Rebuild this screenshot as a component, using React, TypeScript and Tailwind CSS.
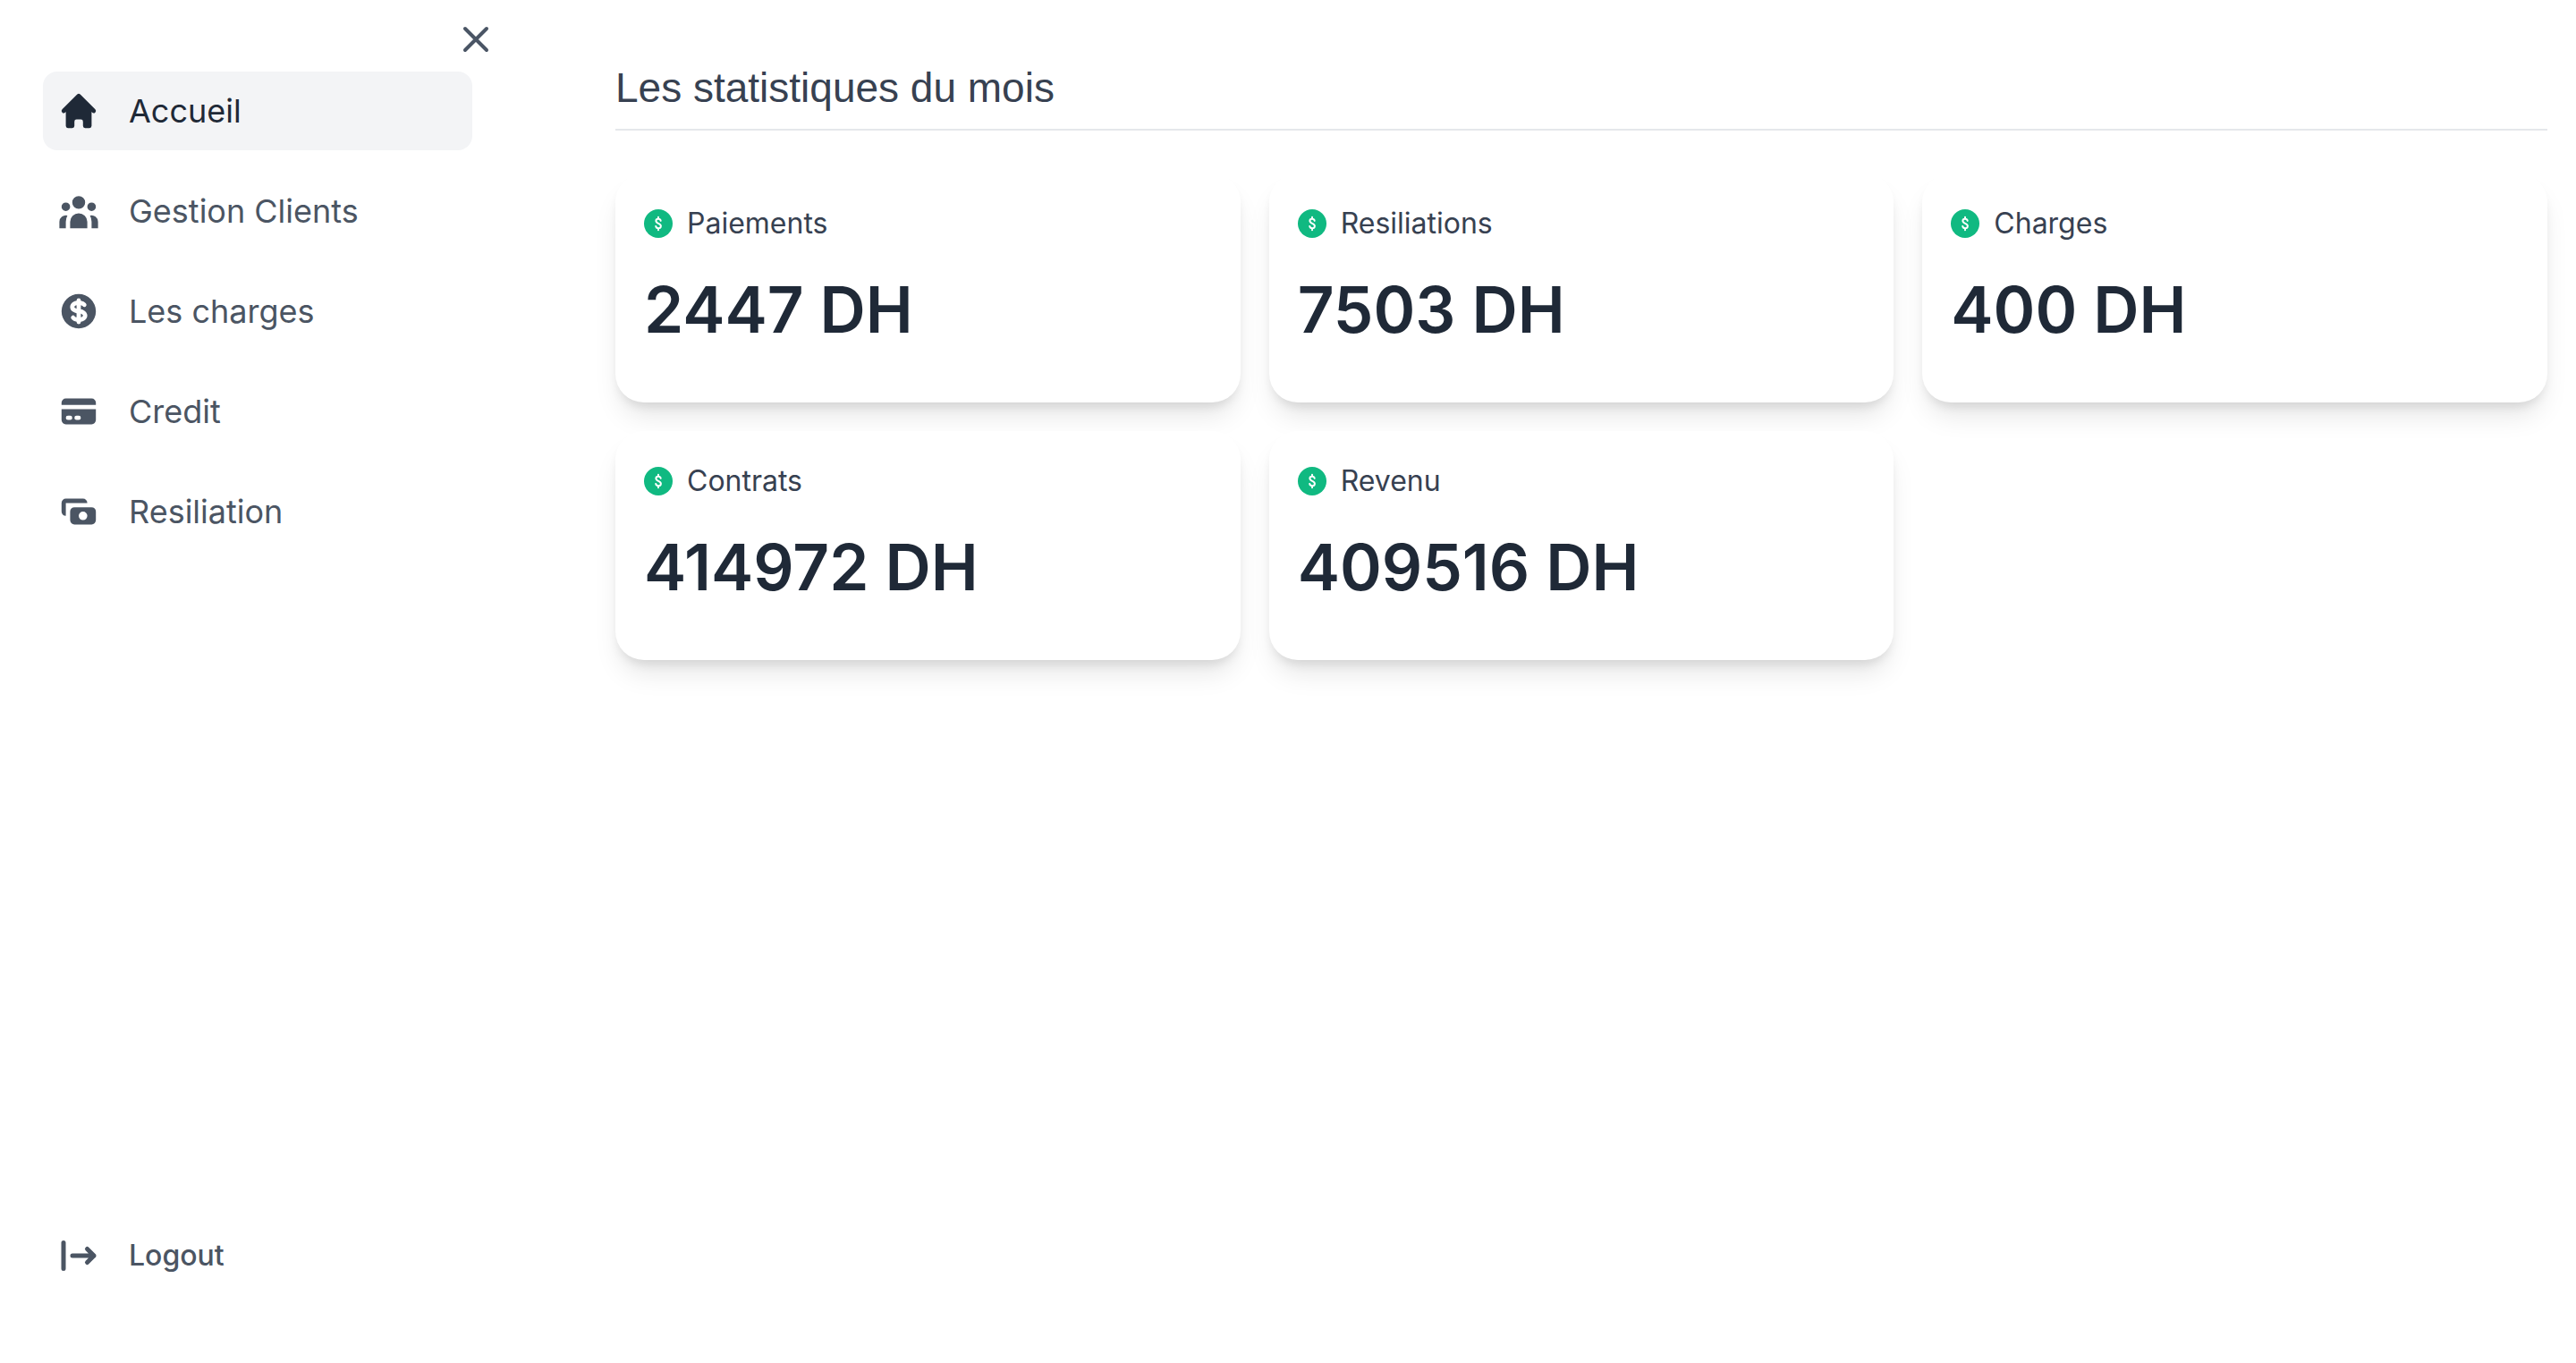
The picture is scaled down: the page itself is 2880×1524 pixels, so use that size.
import type { ComponentType } from "react";
import {
  HiCash,
  HiCreditCard,
  HiCurrencyDollar,
  HiHome,
  HiUserGroup,
} from "react-icons/hi";

type NavItem = {
  label: string;
  icon: ComponentType<{ className?: string }>;
  active?: boolean;
};

const navItems: NavItem[] = [
  { label: "Accueil", icon: HiHome, active: true },
  { label: "Gestion Clients", icon: HiUserGroup },
  { label: "Les charges", icon: HiCurrencyDollar },
  { label: "Credit", icon: HiCreditCard },
  { label: "Resiliation", icon: HiCash },
];

const stats = [
  { label: "Paiements", value: "2447 DH" },
  { label: "Resiliations", value: "7503 DH" },
  { label: "Charges", value: "400 DH" },
  { label: "Contrats", value: "414972 DH" },
  { label: "Revenu", value: "409516 DH" },
];

function CloseIcon() {
  return (
    <svg viewBox="0 0 24 24" className="size-12" fill="none" stroke="currentColor" strokeWidth="2" strokeLinecap="round" aria-hidden="true">
      <path d="M6 6l12 12M18 6L6 18" />
    </svg>
  );
}

function LogoutIcon() {
  return (
    <svg viewBox="0 0 48 48" className="size-12" fill="none" stroke="currentColor" strokeWidth="5" strokeLinecap="round" strokeLinejoin="round" aria-hidden="true">
      <path d="M7 9.5v29M17 24h24M33.500 16.500l7.500 7.500-7.500 7.500" />
    </svg>
  );
}

function DollarBadge() {
  return (
    <svg viewBox="0 0 32 32" className="size-8 shrink-0" fill="none" aria-hidden="true">
      <circle cx="16" cy="16" r="16" fill="#10b981" />
      <path
        d="M16 8.800v1.800M16 21.400v1.800M18.700 12.900c-.3-1.300-1.300-2.100-2.700-2.100-1.500 0-2.600.9-2.600 2.300 0 3.300 5.500 2.200 5.500 5.600 0 1.500-1.200 2.500-2.800 2.500-1.600 0-2.700-.9-2.900-2.300"
        stroke="#fff"
        strokeWidth="2"
        strokeLinecap="round"
      />
    </svg>
  );
}

function Sidebar() {
  return (
    <aside className="flex w-[576px] shrink-0 flex-col pt-5 pr-12 pb-[76px] pl-12 text-gray-600">
      <div className="-mr-7 flex h-[60px] items-start justify-end">
        <button type="button" aria-label="Fermer le menu">
          <CloseIcon />
        </button>
      </div>
      <nav className="flex flex-col gap-6">
        {navItems.map(({ label, icon: Icon, active }) => (
          <a
            key={label}
            href="#"
            aria-current={active ? "page" : undefined}
            className={
              active
                ? "flex h-[88px] items-center gap-8 rounded-2xl bg-[#f3f4f6] px-4 text-[36px] text-[#1f2937]"
                : "flex h-[88px] items-center gap-8 rounded-2xl px-4 text-[36px] text-[#4b5563]"
            }
          >
            <Icon className="size-12 shrink-0" />
            {label}
          </a>
        ))}
      </nav>
      <button
        type="button"
        className="mt-auto flex h-[88px] items-center gap-8 rounded-2xl px-4 text-[32px] font-medium text-[#4b5563]"
      >
        <LogoutIcon />
        Logout
      </button>
    </aside>
  );
}

export default function App() {
  return (
    <div className="flex min-h-screen bg-white font-['Inter',sans-serif]">
      <Sidebar />
      <main className="min-w-0 flex-1 py-16 pr-8 pl-28">
        <h1 className="border-b-2 border-[#e5e7eb] pb-3 font-['Liberation_Sans',sans-serif] text-[46px] leading-[68px] text-[#374151]">
          Les statistiques du mois
        </h1>
        <section className="mt-12 grid grid-cols-3 gap-8">
          {stats.map(({ label, value }) => (
            <article
              key={label}
              className="rounded-[32px] bg-white p-8 shadow-[0_20px_30px_-6px_rgba(0,0,0,0.1),0_8px_12px_-4px_rgba(0,0,0,0.1)]"
            >
              <div className="flex items-center gap-4">
                <DollarBadge />
                <h2 className="text-[32px] leading-[48px] text-[#374151]">{label}</h2>
              </div>
              <p className="my-8 text-[71px] leading-[80px] font-semibold text-[#1f2937]">{value}</p>
            </article>
          ))}
        </section>
      </main>
    </div>
  );
}
